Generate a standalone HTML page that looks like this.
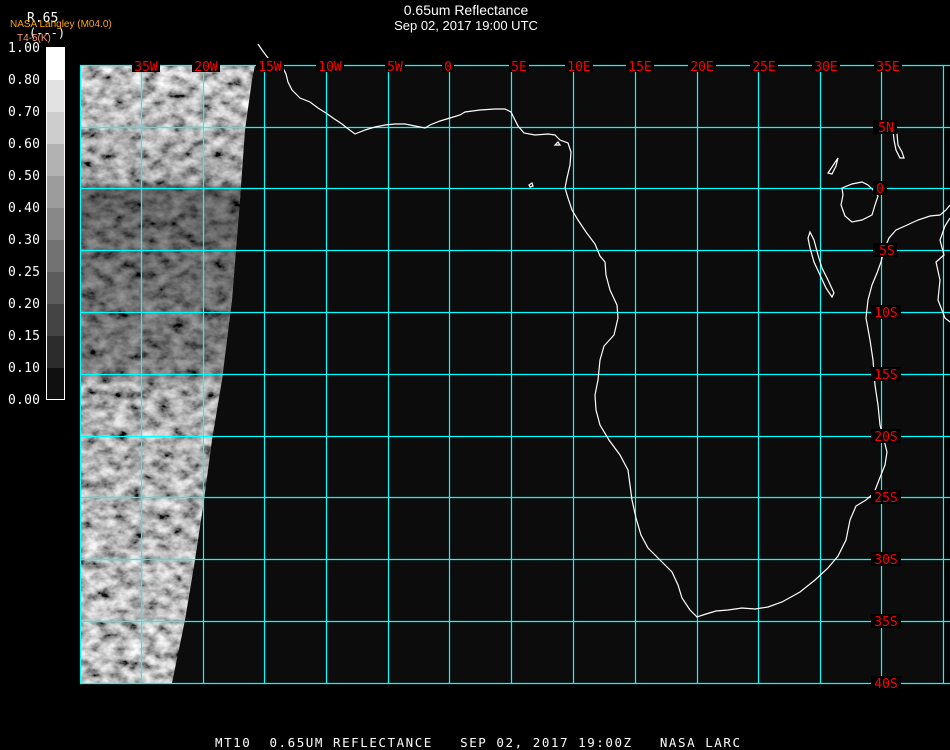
<!DOCTYPE html>
<html><head><meta charset="utf-8"><style>
html,body{margin:0;padding:0;background:#000;width:950px;height:750px;overflow:hidden}
svg{display:block}
text{font-family:"DejaVu Sans Mono","Liberation Mono",monospace}
</style></head><body>
<svg width="950" height="750" viewBox="0 0 950 750" xmlns="http://www.w3.org/2000/svg">
<defs>
<filter id="n" x="0" y="0" width="100%" height="100%">
<feTurbulence type="fractalNoise" baseFrequency="0.07 0.1" numOctaves="4" seed="7"/>
<feColorMatrix type="matrix" values="1.6 0 0 0 -0.3  1.6 0 0 0 -0.3  1.6 0 0 0 -0.3  0 0 0 0 1"/>
</filter>
<clipPath id="c"><polygon points="80,65 255,65 252,80 245,130 240,200 232,300 222,380 212,440 204,500 195,560 185,620 172,683 80,683"/></clipPath>
<linearGradient id="g" x1="0" y1="0" x2="0" y2="1">
<stop offset="0" stop-color="#fff" stop-opacity="0.05"/>
<stop offset="0.19" stop-color="#000" stop-opacity="0.15"/>
<stop offset="0.2" stop-color="#000" stop-opacity="0.5"/>
<stop offset="0.5" stop-color="#000" stop-opacity="0.35"/>
<stop offset="0.52" stop-color="#000" stop-opacity="0.1"/>
<stop offset="1" stop-color="#fff" stop-opacity="0.05"/>
</linearGradient>
</defs>
<rect x="80" y="65" width="863" height="618" fill="#0c0c0c"/>
<g clip-path="url(#c)">
<rect x="80" y="65" width="180" height="618" filter="url(#n)"/>
<rect x="80" y="65" width="180" height="618" fill="url(#g)"/>
</g>
<g stroke="#00ffff" stroke-width="1.2">
<line x1="80.5" y1="65" x2="80.5" y2="683"/><line x1="141.5" y1="65" x2="141.5" y2="683"/><line x1="203.5" y1="65" x2="203.5" y2="683"/><line x1="264.5" y1="65" x2="264.5" y2="683"/><line x1="326.5" y1="65" x2="326.5" y2="683"/><line x1="388.5" y1="65" x2="388.5" y2="683"/><line x1="449.5" y1="65" x2="449.5" y2="683"/><line x1="511.5" y1="65" x2="511.5" y2="683"/><line x1="573.5" y1="65" x2="573.5" y2="683"/><line x1="635.5" y1="65" x2="635.5" y2="683"/><line x1="697.5" y1="65" x2="697.5" y2="683"/><line x1="758.5" y1="65" x2="758.5" y2="683"/><line x1="820.5" y1="65" x2="820.5" y2="683"/><line x1="881.5" y1="65" x2="881.5" y2="683"/><line x1="943.5" y1="65" x2="943.5" y2="683"/>
<line x1="80" y1="65.5" x2="950" y2="65.5"/><line x1="80" y1="127.5" x2="950" y2="127.5"/><line x1="80" y1="188.5" x2="950" y2="188.5"/><line x1="80" y1="250.5" x2="950" y2="250.5"/><line x1="80" y1="312.5" x2="950" y2="312.5"/><line x1="80" y1="374.5" x2="950" y2="374.5"/><line x1="80" y1="436.5" x2="950" y2="436.5"/><line x1="80" y1="497.5" x2="950" y2="497.5"/><line x1="80" y1="559.5" x2="950" y2="559.5"/><line x1="80" y1="621.5" x2="950" y2="621.5"/><line x1="80" y1="683.5" x2="950" y2="683.5"/>
</g>
<g fill="none" stroke="#fff" stroke-width="1.2">
<polyline points="258,44 262,50 268,58 276,62 282,66 286,74 288,82 292,90 296,94 300,98 310,102 318,108 326,113 333,118 342,124 347,128 355,134 365,130 375,127 385,125 395,124 405,124 415,126 425,128 430,125 440,121 450,118 460,115 465,112 480,110 495,109 505,109 511,112 514,118 518,126 524,133 535,135 548,134 555,135 560,140 568,143 571,152 570,165 567,178 565,188 568,198 572,210 578,220 586,232 595,244 600,256 605,262 606,275 610,290 617,305 618,318 614,335 604,346 600,360 598,380 595,395 596,410 600,425 609,440 620,455 628,470 630,485 632,500 636,518 641,535 648,548 660,560 672,572 678,585 682,598 690,610 697,617 706,614 716,611 728,610 742,608 755,609 768,607 782,602 800,592 815,580 828,568 838,556 846,540 850,520 856,506 866,500 874,493 879,480 885,465 887,452 884,440 880,425 878,405 875,385 873,360 870,340 866,318 868,300 872,285 877,273 881,262 884,250 889,238 896,230 905,226 918,220 930,216 940,215 946,210 950,205"/>
<polyline points="950,218 945,226 940,240 944,255 936,262 940,280 938,300 945,318 950,322"/>
<polygon points="842,188 852,184 862,182 868,185 873,190 878,196 875,205 872,215 862,220 852,222 845,216 841,205 843,195"/>
<polygon points="810,232 814,240 818,255 822,268 828,280 834,293 832,297 826,288 820,275 814,262 810,248 808,238"/>
<polygon points="828,173 834,164 838,158 836,166 832,174"/>
<polygon points="893,130 897,134 898,145 902,152 904,158 900,158 896,150 894,140"/>
<polygon points="555,145 558,142 560,145"/>
<polygon points="529,185 532,183 533,186 530,187"/>
</g>
<g fill="#ff0000" font-size="13" text-anchor="middle">
<rect x="132" y="58" width="28" height="14" fill="#000"/><text x="146" y="71">35W</text>
<rect x="192" y="58" width="28" height="14" fill="#000"/><text x="206" y="71">20W</text>
<rect x="256" y="58" width="28" height="14" fill="#000"/><text x="270" y="71">15W</text>
<rect x="316" y="58" width="28" height="14" fill="#000"/><text x="330" y="71">10W</text>
<rect x="385" y="58" width="20" height="14" fill="#000"/><text x="395" y="71">5W</text>
<rect x="442" y="58" width="12" height="14" fill="#000"/><text x="448" y="71">0</text>
<rect x="509" y="58" width="20" height="14" fill="#000"/><text x="519" y="71">5E</text>
<rect x="565" y="58" width="28" height="14" fill="#000"/><text x="579" y="71">10E</text>
<rect x="626" y="58" width="28" height="14" fill="#000"/><text x="640" y="71">15E</text>
<rect x="688" y="58" width="28" height="14" fill="#000"/><text x="702" y="71">20E</text>
<rect x="750" y="58" width="28" height="14" fill="#000"/><text x="764" y="71">25E</text>
<rect x="812" y="58" width="28" height="14" fill="#000"/><text x="826" y="71">30E</text>
<rect x="874" y="58" width="28" height="14" fill="#000"/><text x="888" y="71">35E</text>
</g>
<g fill="#ff0000" font-size="13" text-anchor="middle">
<rect x="873" y="120" width="24" height="14" fill="#000"/><text x="886" y="132">5N</text>
<rect x="873" y="181" width="14" height="14" fill="#000"/><text x="880" y="193">0</text>
<rect x="873" y="243" width="24" height="14" fill="#000"/><text x="887" y="255">5S</text>
<rect x="871" y="305" width="30" height="14" fill="#000"/><text x="886" y="317">10S</text>
<rect x="871" y="367" width="30" height="14" fill="#000"/><text x="886" y="379">15S</text>
<rect x="871" y="429" width="30" height="14" fill="#000"/><text x="886" y="441">20S</text>
<rect x="871" y="490" width="30" height="14" fill="#000"/><text x="886" y="502">25S</text>
<rect x="871" y="552" width="30" height="14" fill="#000"/><text x="886" y="564">30S</text>
<rect x="871" y="614" width="30" height="14" fill="#000"/><text x="886" y="626">35S</text>
<rect x="871" y="676" width="30" height="14" fill="#000"/><text x="886" y="688">40S</text>
</g>
<rect x="46.5" y="47.5" width="18" height="352" fill="none" stroke="#fff"/>
<rect x="47" y="48" width="17" height="32" fill="#fff"/>
<rect x="47" y="80" width="17" height="32" fill="#e2e2e2"/>
<rect x="47" y="112" width="17" height="32" fill="#cdcdcd"/>
<rect x="47" y="144" width="17" height="32" fill="#b2b2b2"/>
<rect x="47" y="176" width="17" height="32" fill="#9c9c9c"/>
<rect x="47" y="208" width="17" height="32" fill="#888"/>
<rect x="47" y="240" width="17" height="32" fill="#727272"/>
<rect x="47" y="272" width="17" height="32" fill="#5c5c5c"/>
<rect x="47" y="304" width="17" height="32" fill="#444"/>
<rect x="47" y="336" width="17" height="32" fill="#2c2c2c"/>
<rect x="47" y="368" width="17" height="31" fill="#101010"/>
<g fill="#fff" font-size="13" text-anchor="end">
<text x="40" y="52" textLength="32">1.00</text><text x="40" y="84" textLength="32">0.80</text><text x="40" y="116" textLength="32">0.70</text><text x="40" y="148" textLength="32">0.60</text><text x="40" y="180" textLength="32">0.50</text><text x="40" y="212" textLength="32">0.40</text><text x="40" y="244" textLength="32">0.30</text><text x="40" y="276" textLength="32">0.25</text><text x="40" y="308" textLength="32">0.20</text><text x="40" y="340" textLength="32">0.15</text><text x="40" y="372" textLength="32">0.10</text><text x="40" y="404" textLength="32">0.00</text>
</g>
<text x="27" y="22" fill="#fff" font-size="13">R.65</text>
<text x="29" y="37" fill="#fff" font-size="12">(---)</text>
<text x="10" y="27" fill="#ffa500" font-size="10" style="font-family:'Liberation Sans',sans-serif">NASA Langley (M04.0)</text>
<text x="17" y="41" fill="#ff9a70" font-size="10" style="font-family:'Liberation Sans',sans-serif">T4-5(K)</text>
<text x="466" y="15" fill="#fff" font-size="14" text-anchor="middle" style="font-family:'Liberation Sans',sans-serif">0.65um Reflectance</text>
<text x="466" y="30" fill="#fff" font-size="13" text-anchor="middle" style="font-family:'Liberation Sans',sans-serif">Sep 02, 2017 19:00 UTC</text>
<text x="215" y="747" fill="#fff" font-size="12.5" textLength="525" xml:space="preserve">MT10  0.65UM REFLECTANCE   SEP 02, 2017 19:00Z   NASA LARC</text>
</svg>
</body></html>
